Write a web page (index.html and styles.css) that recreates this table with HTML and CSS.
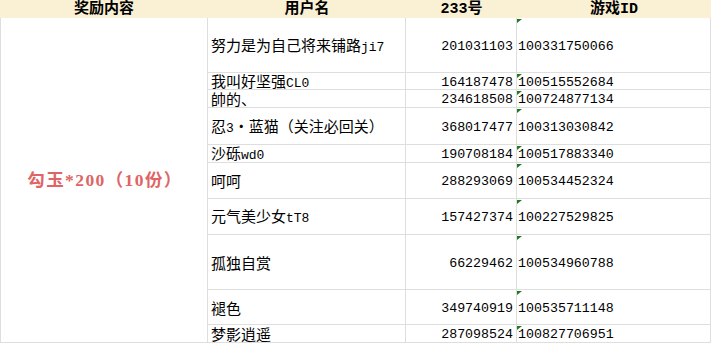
FILE: index.html
```html
<!DOCTYPE html>
<html lang="zh-CN">
<head>
<meta charset="utf-8">
<title>奖励名单</title>
<link rel="stylesheet" href="styles.css">
</head>
<body>
<div class="sheet">
  <div class="hd">奖励内容</div>
  <div class="hd">用户名</div>
  <div class="hd">233号</div>
  <div class="hd">游戏ID</div>

  <div class="reward">勾玉*200（10份）</div>

  <div class="c name"><span>努力是为自己将来铺路<span class="lat">ji7</span></span></div>
  <div class="c num">201031103</div>
  <div class="c gid">100331750066</div>

  <div class="c name"><span>我叫好坚强<span class="lat">CL0</span></span></div>
  <div class="c num">164187478</div>
  <div class="c gid">100515552684</div>

  <div class="c name"><span>帥的、</span></div>
  <div class="c num">234618508</div>
  <div class="c gid">100724877134</div>

  <div class="c name"><span>忍<span class="lat">3</span>・蓝猫（关注必回关）</span></div>
  <div class="c num">368017477</div>
  <div class="c gid">100313030842</div>

  <div class="c name"><span>沙砾<span class="lat">wd0</span></span></div>
  <div class="c num">190708184</div>
  <div class="c gid">100517883340</div>

  <div class="c name"><span>呵呵</span></div>
  <div class="c num">288293069</div>
  <div class="c gid">100534452324</div>

  <div class="c name"><span>元气美少女<span class="lat">tT8</span></span></div>
  <div class="c num">157427374</div>
  <div class="c gid">100227529825</div>

  <div class="c name"><span>孤独自赏</span></div>
  <div class="c num">66229462</div>
  <div class="c gid">100534960788</div>

  <div class="c name"><span>褪色</span></div>
  <div class="c num">349740919</div>
  <div class="c gid">100535711148</div>

  <div class="c name"><span>梦影逍遥</span></div>
  <div class="c num">287098524</div>
  <div class="c gid">100827706951</div>
</div>
</body>
</html>
```

FILE: styles.css
```css
* {
  box-sizing: border-box;
}

html, body {
  margin: 0;
  padding: 0;
  background: #ffffff;
}

body {
  width: 711px;
  height: 343px;
  overflow: hidden;
  font-family: "Noto Sans CJK SC", sans-serif;
  color: #000000;
}

.sheet {
  display: grid;
  grid-template-columns: 208px 198px 111px 194px;
  grid-template-rows: 18px 55px 17px 18px 37px 18px 36px 36px 55px 35px 18px;
}

.hd {
  background: #faf0d3;
  font-family: "Liberation Mono", "Noto Sans CJK SC", monospace;
  font-weight: bold;
  font-size: 15px;
  line-height: 1;
  display: flex;
  align-items: center;
  justify-content: center;
  padding-top: 1px;
}

.reward {
  grid-column: 1;
  grid-row: 2 / 12;
  border-left: 1px solid #dedede;
  border-right: 1px solid #dedede;
  border-bottom: 1px solid #dedede;
  display: flex;
  align-items: center;
  justify-content: center;
  padding-top: 2px;
  padding-left: 2px;
  color: #e06464;
  font-family: "Liberation Serif", "Noto Sans CJK SC", serif;
  font-weight: bold;
  font-size: 17.5px;
  letter-spacing: 1.4px;
  line-height: 1;
}

.c {
  position: relative;
  border-right: 1px solid #dedede;
  border-bottom: 1px solid #dedede;
  display: flex;
  align-items: center;
  line-height: 1;
  padding-top: 3px;
  white-space: nowrap;
}

.name {
  font-size: 15px;
  padding-left: 3px;
  padding-top: 0;
  padding-bottom: 0;
}

.lat {
  font-family: "Liberation Mono", monospace;
  font-size: 13px;
}

.num,
.gid {
  font-family: "Liberation Mono", monospace;
  font-size: 13.3px;
}

.num {
  justify-content: flex-end;
  padding-right: 3px;
}

.gid {
  padding-left: 1px;
}

.gid::before {
  content: "";
  position: absolute;
  left: 0;
  top: 1px;
  width: 0;
  height: 0;
  border-top: 4px solid #1f7a1f;
  border-right: 5px solid transparent;
}
```
